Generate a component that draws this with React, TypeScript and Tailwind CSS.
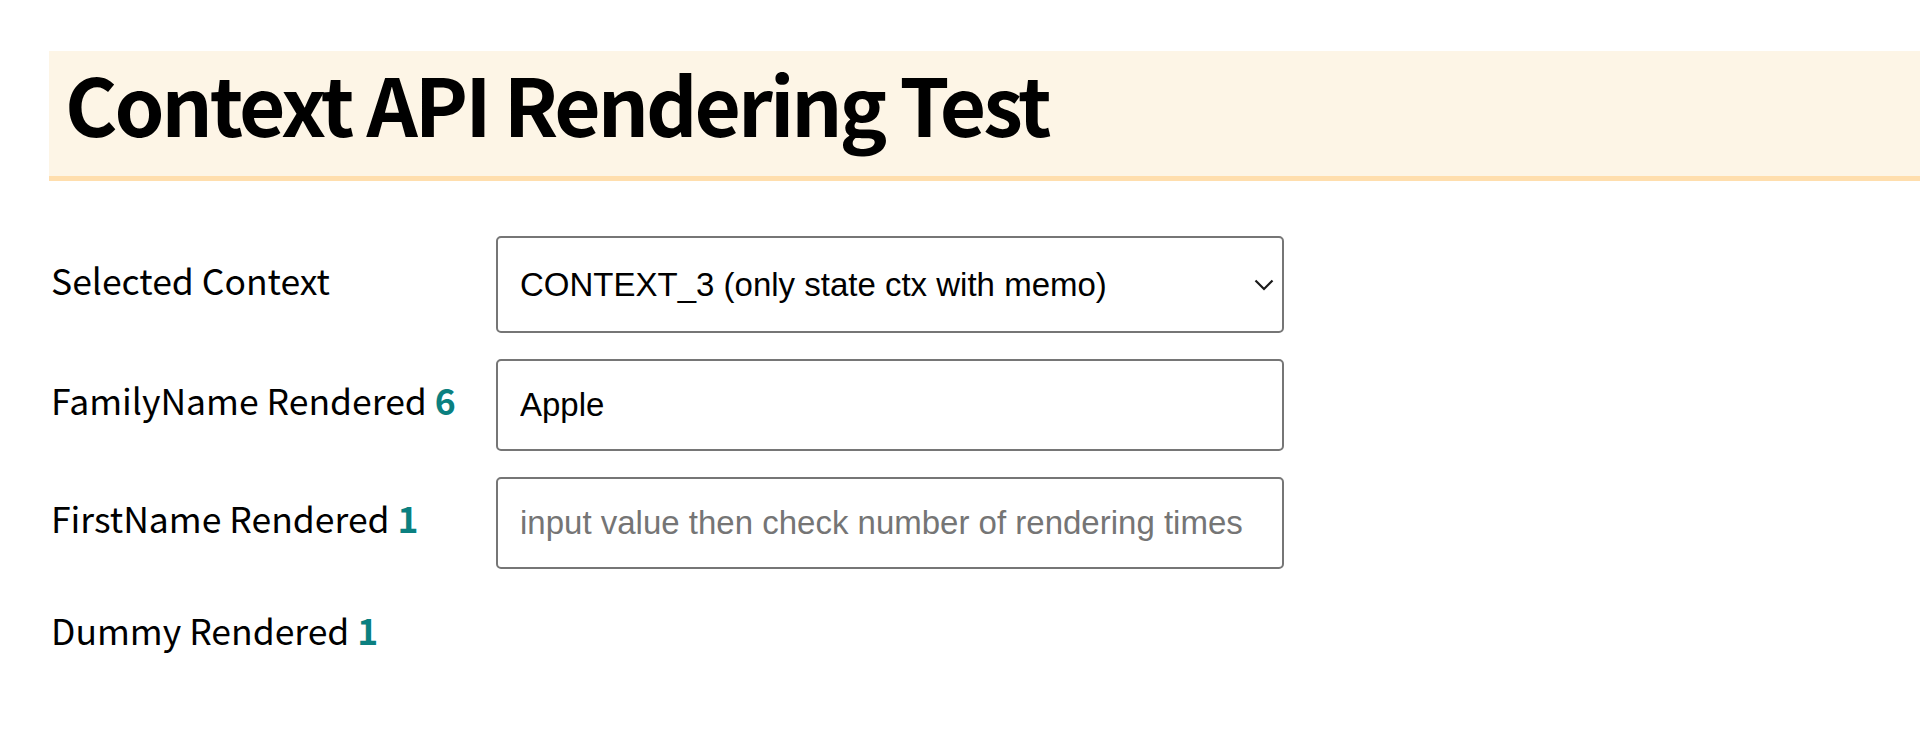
import { useState } from "react";

const labelFont = "font-['Noto_Sans_CJK_KR','Noto_Sans',sans-serif]";
const fieldFont = "font-['Liberation_Sans',Arial,sans-serif]";

function Count({ value }: { value: number }) {
  return <span className="font-bold text-[#0b8080]">{value}</span>;
}

export default function App() {
  const [context, setContext] = useState("CONTEXT_3");
  const [familyName, setFamilyName] = useState("Apple");
  const [firstName, setFirstName] = useState("");

  return (
    <div className={`min-h-screen bg-white text-black ${labelFont}`}>
      <div className="pt-[51px] pl-[49px]">
        <header className="flex h-[130px] items-center border-b-[5px] border-[#ffdead] bg-[#fdf5e6] pb-[24px] pl-[16px]">
          <h1 className="text-[80px] font-bold leading-none tracking-[-3px]">
            Context API Rendering Test
          </h1>
        </header>
      </div>

      <div className="flex flex-col gap-[26px] pt-[55px] pl-[51px] text-[35.5px]">
        <div className="flex h-[97px] items-center">
          <label className="w-[445px] pb-[10px]">Selected Context</label>
          <div className="relative w-[788px]">
            <select
              value={context}
              onChange={(e) => setContext(e.target.value)}
              className={`h-[97px] w-full appearance-none rounded-[5px] border-2 border-[#767676] bg-white pl-[22px] text-[33px] text-black ${fieldFont}`}
            >
              <option value="CONTEXT_1">CONTEXT_1 (single ctx)</option>
              <option value="CONTEXT_2">CONTEXT_2 (state & dispatch ctx)</option>
              <option value="CONTEXT_3">CONTEXT_3 (only state ctx with memo)</option>
            </select>
            <svg
              className="pointer-events-none absolute right-[10px] top-1/2 -translate-y-1/2"
              width="20"
              height="12"
              viewBox="0 0 20 12"
              fill="none"
            >
              <path d="M1.5 1.5l8.5 8.5 8.5-8.5" stroke="#1a1a1a" strokeWidth="2.2" />
            </svg>
          </div>
        </div>

        <div className="flex h-[92px] items-center">
          <label className="w-[445px] pb-[10px]">
            FamilyName Rendered <Count value={6} />
          </label>
          <input
            value={familyName}
            onChange={(e) => setFamilyName(e.target.value)}
            className={`h-[92px] w-[788px] rounded-[5px] border-2 border-[#767676] px-[22px] text-[33px] outline-none ${fieldFont}`}
          />
        </div>

        <div className="flex h-[92px] items-center">
          <label className="w-[445px] pb-[10px]">
            FirstName Rendered <Count value={1} />
          </label>
          <input
            value={firstName}
            onChange={(e) => setFirstName(e.target.value)}
            placeholder="input value then check number of rendering times"
            className={`h-[92px] w-[788px] rounded-[5px] border-2 border-[#767676] px-[22px] text-[33px] outline-none placeholder:text-[#757575] ${fieldFont}`}
          />
        </div>

        <div className="flex h-[79px] items-center">
          <label className="pb-[10px]">
            Dummy Rendered <Count value={1} />
          </label>
        </div>
      </div>
    </div>
  );
}
